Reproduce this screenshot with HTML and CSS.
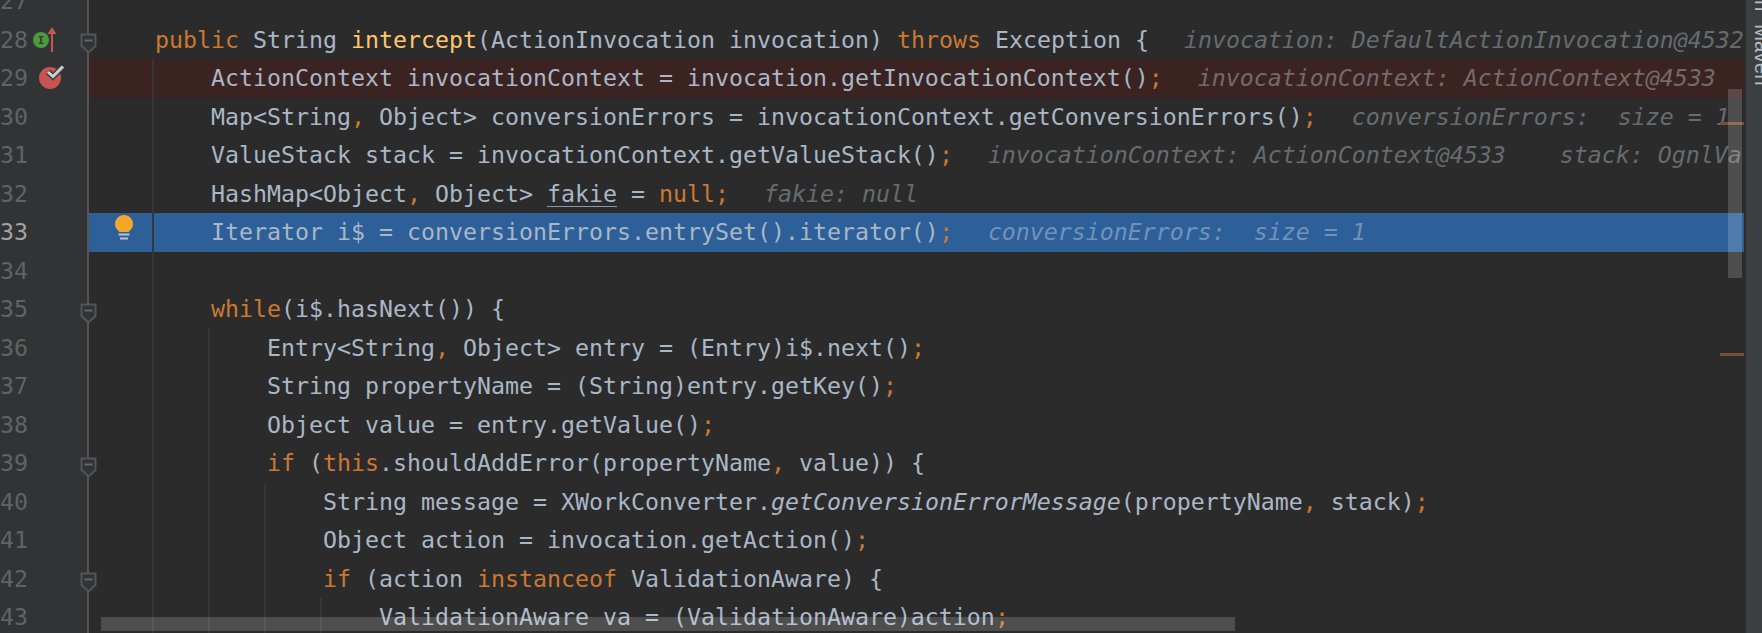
FILE: index.html
```html
<!DOCTYPE html>
<html lang="en">
<head>
<meta charset="utf-8">
<title>Editor</title>
<link rel="stylesheet" href="styles.css">
</head>
<body>
<div class="ide">
  <main class="editor">
    <div class="lines">
      <div class="row"><div class="gutter"><span class="num">27</span></div><div class="code"></div></div>
      <div class="row"><div class="gutter"><span class="num">28</span>
        <svg class="mark mark-override" width="32" height="28" viewBox="0 0 32 28"><circle cx="11" cy="13" r="8" fill="#4c9a3e"/><text x="11" y="17" class="mark-i">I</text><path d="M22 6V25" stroke="#c75450" stroke-width="2" fill="none"/><path d="M17.500 7L22 0L26.500 7Z" fill="#c75450"/></svg>
        <svg class="fold" width="17" height="21" viewBox="0 0 17 21"><path d="M1.500 1.500H15.500V13L8.500 19.500L1.500 13Z" fill="#313335" stroke="#555" stroke-width="2"/><path d="M4.500 7.500H12.500" stroke="#666" stroke-width="2"/></svg>
      </div><div class="code"><span class="kw">public</span> String <span class="fn">intercept</span>(ActionInvocation invocation) <span class="kw">throws</span> Exception {<span class="hint">invocation: DefaultActionInvocation@4532</span></div></div>
      <div class="row row-break"><div class="gutter"><span class="num">29</span>
        <svg class="mark mark-break" width="30" height="30" viewBox="0 0 30 30"><circle cx="12" cy="18" r="11" fill="#c75450"/><path d="M10 12L15 16.500L25 6.500" fill="none" stroke="#3c3f41" stroke-width="6"/><path d="M10 12L15 16.500L25 6.500" fill="none" stroke="#cfcfcf" stroke-width="3"/></svg>
      </div><div class="code">    ActionContext invocationContext = invocation.getInvocationContext()<span class="kw">;</span><span class="hint">invocationContext: ActionContext@4533</span></div></div>
      <div class="row"><div class="gutter"><span class="num">30</span></div><div class="code">    Map&lt;String<span class="kw">,</span> Object&gt; conversionErrors = invocationContext.getConversionErrors()<span class="kw">;</span><span class="hint">conversionErrors:  size = 1</span></div></div>
      <div class="row"><div class="gutter"><span class="num">31</span></div><div class="code">    ValueStack stack = invocationContext.getValueStack()<span class="kw">;</span><span class="hint">invocationContext: ActionContext@4533</span><span class="hint hint-next">stack: OgnlValueStack@4534</span></div></div>
      <div class="row"><div class="gutter"><span class="num">32</span></div><div class="code">    HashMap&lt;Object<span class="kw">,</span> Object&gt; <span class="under">fakie</span> = <span class="kw">null;</span><span class="hint">fakie: null</span></div></div>
      <div class="row row-current"><div class="gutter"><span class="num">33</span></div><div class="code"><svg class="bulb" width="22" height="27" viewBox="0 0 22 27"><path d="M6.500 18C3.500 15.500 2 13 2 10C2 5 6 1 11 1C16 1 20 5 20 10C20 13 18.500 15.500 15.500 18Z" fill="#f2a829"/><path d="M5.500 20.500H16.500" stroke="#b9c4d0" stroke-width="2"/><path d="M7 24.500H15" stroke="#b9c4d0" stroke-width="2"/></svg>    Iterator i$ = conversionErrors.entrySet().iterator()<span class="kw">;</span><span class="hint">conversionErrors:  size = 1</span></div></div>
      <div class="row"><div class="gutter"><span class="num">34</span></div><div class="code"></div></div>
      <div class="row"><div class="gutter"><span class="num">35</span>
        <svg class="fold" width="17" height="21" viewBox="0 0 17 21"><path d="M1.500 1.500H15.500V13L8.500 19.500L1.500 13Z" fill="#313335" stroke="#555" stroke-width="2"/><path d="M4.500 7.500H12.500" stroke="#666" stroke-width="2"/></svg>
      </div><div class="code">    <span class="kw">while</span>(i$.hasNext()) {</div></div>
      <div class="row"><div class="gutter"><span class="num">36</span></div><div class="code">        Entry&lt;String<span class="kw">,</span> Object&gt; entry = (Entry)i$.next()<span class="kw">;</span></div></div>
      <div class="row"><div class="gutter"><span class="num">37</span></div><div class="code">        String propertyName = (String)entry.getKey()<span class="kw">;</span></div></div>
      <div class="row"><div class="gutter"><span class="num">38</span></div><div class="code">        Object value = entry.getValue()<span class="kw">;</span></div></div>
      <div class="row"><div class="gutter"><span class="num">39</span>
        <svg class="fold" width="17" height="21" viewBox="0 0 17 21"><path d="M1.500 1.500H15.500V13L8.500 19.500L1.500 13Z" fill="#313335" stroke="#555" stroke-width="2"/><path d="M4.500 7.500H12.500" stroke="#666" stroke-width="2"/></svg>
      </div><div class="code">        <span class="kw">if</span> (<span class="kw">this</span>.shouldAddError(propertyName<span class="kw">,</span> value)) {</div></div>
      <div class="row"><div class="gutter"><span class="num">40</span></div><div class="code">            String message = XWorkConverter.<em class="static">getConversionErrorMessage</em>(propertyName<span class="kw">,</span> stack)<span class="kw">;</span></div></div>
      <div class="row"><div class="gutter"><span class="num">41</span></div><div class="code">            Object action = invocation.getAction()<span class="kw">;</span></div></div>
      <div class="row"><div class="gutter"><span class="num">42</span>
        <svg class="fold" width="17" height="21" viewBox="0 0 17 21"><path d="M1.500 1.500H15.500V13L8.500 19.500L1.500 13Z" fill="#313335" stroke="#555" stroke-width="2"/><path d="M4.500 7.500H12.500" stroke="#666" stroke-width="2"/></svg>
      </div><div class="code">            <span class="kw">if</span> (action <span class="kw">instanceof</span> ValidationAware) {</div></div>
      <div class="row"><div class="gutter"><span class="num">43</span></div><div class="code">                ValidationAware va = (ValidationAware)action<span class="kw">;</span></div></div>
    </div>
    <i class="guide guide-1"></i>
    <i class="guide guide-2"></i>
    <i class="guide guide-3"></i>
    <i class="guide guide-4"></i>
    <i class="err-mark err-mark-1"></i>
    <i class="err-mark err-mark-2"></i>
    <i class="scroll scroll-v"></i>
    <i class="scroll scroll-h"></i>
  </main>
  <aside class="strip"><span class="strip-label strip-label-prev">n</span><span class="strip-label strip-label-maven">Maven</span></aside>
</div>
</body>
</html>
```

FILE: styles.css
```css
* { box-sizing: border-box; }
html, body { margin: 0; height: 100%; background: #2b2b2b; overflow: hidden; }
.ide { display: flex; height: 633px; width: 1762px; overflow: hidden; }
.editor { position: relative; flex: 1; min-width: 0; overflow: hidden; padding-right: 2px; background: #2b2b2b; }
.lines { margin-top: -18px; }
.row { display: flex; height: 38.5px; font: 23.256px/38.5px "DejaVu Sans Mono", "Liberation Mono", monospace; color: #a9b7c6; white-space: pre; }
.gutter { position: relative; flex: 0 0 89px; display: flex; background: #313335; border-right: 2px solid #555; }
.num { flex: 0 0 19px; display: flex; justify-content: flex-end; color: #606366; }
.code { position: relative; flex: 1; min-width: 0; overflow: hidden; padding-left: 66px; }
.row-break .code { background: #3b2322; }
.row-current .code { background: #2d5f98; }
.row-current .num { color: #a4a3a3; }
.kw { color: #cc7832; }
.fn { color: #ffc66d; }
.static { font-style: italic; }
.under { text-decoration: underline 1px #8a97a5; text-underline-offset: 4px; text-decoration-skip-ink: none; }
.hint { margin-left: 35px; font-style: italic; color: #666b70; }
.hint-next { margin-left: 54px; }
.row-break .hint { color: #746a6c; }
.row-current .hint { color: #7292bb; }
.mark { position: absolute; }
.mark-override { left: 30px; top: 6.5px; overflow: visible; }
.mark-i { font: bold 11px "DejaVu Sans Mono", monospace; fill: #2f3b2a; text-anchor: middle; }
.mark-break { left: 38px; top: 1px; overflow: visible; }
.fold { position: absolute; left: 79.5px; top: 12.5px; }
.bulb { position: absolute; left: 24px; top: 1px; }
.guide { position: absolute; bottom: 0; width: 2px; background: #363636; }
.guide-1 { left: 152px; top: 59px; }
.guide-2 { left: 208px; top: 329px; }
.guide-3 { left: 264px; top: 483px; }
.guide-4 { left: 320px; top: 598px; }
.err-mark { position: absolute; left: 1720px; width: 24px; height: 3px; background: #7b4f37; }
.err-mark-1 { top: 122px; }
.err-mark-2 { top: 353px; }
.scroll { position: absolute; background: rgba(255, 255, 255, 0.17); }
.scroll-v { left: 1728px; top: 89px; width: 14px; height: 189px; }
.scroll-h { left: 101px; top: 617px; width: 1134px; height: 14px; }
.strip { flex: 0 0 16px; background: #3c3f41; display: flex; flex-direction: column; align-items: flex-start; overflow: hidden; }
.strip-label { writing-mode: vertical-rl; font: 20.5px/24px "Liberation Sans", sans-serif; color: #b5bcc2; margin-left: 4px; flex: none; }
.strip-label-prev { margin-bottom: 13px; }
```
